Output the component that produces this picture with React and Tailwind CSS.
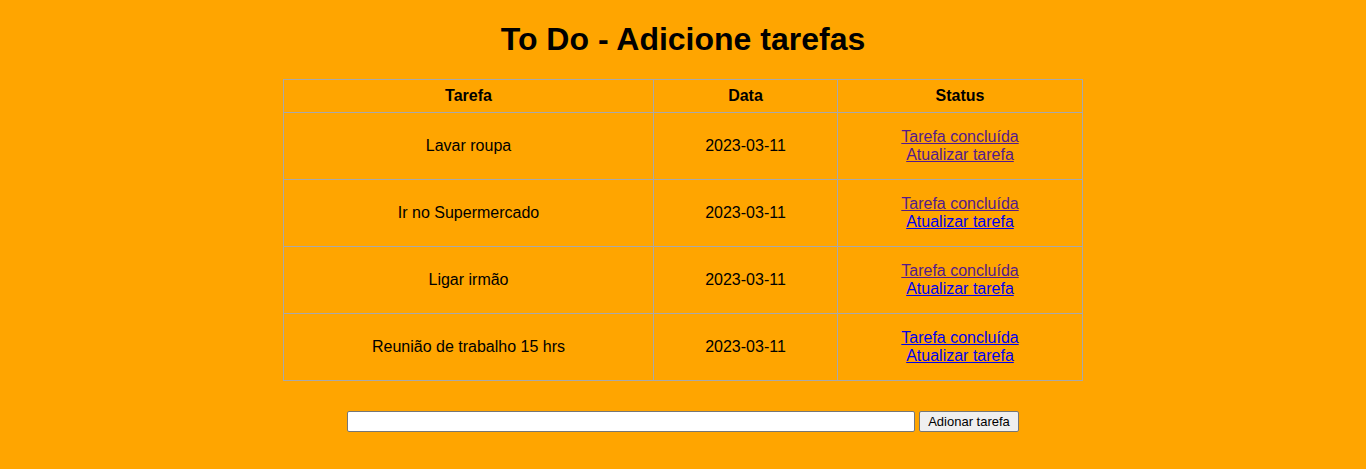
const tasks = [
  { name: "Lavar roupa", date: "2023-03-11", done: true, update: true },
  { name: "Ir no Supermercado", date: "2023-03-11", done: true, update: false },
  { name: "Ligar irmão", date: "2023-03-11", done: true, update: false },
  { name: "Reunião de trabalho 15 hrs", date: "2023-03-11", done: false, update: false },
];

const visited = "text-[#551a8b]";
const fresh = "text-[#0000ee]";

export default function App() {
  return (
    <div className="min-h-[469px] bg-[#ffa500] font-['Liberation_Sans',Arial,sans-serif] text-black">
      <h1 className="pt-[21px] text-center text-[32px] font-bold leading-[37px]">
        To Do - Adicione tarefas
      </h1>

      <table className="mx-auto mt-[21px] w-[800px] border-collapse border border-[#a9a9a9] text-base">
        <thead>
          <tr className="h-[33px]">
            <th className="w-[370px] border border-[#a9a9a9] font-bold">Tarefa</th>
            <th className="w-[184px] border border-[#a9a9a9] font-bold">Data</th>
            <th className="border border-[#a9a9a9] font-bold">Status</th>
          </tr>
        </thead>
        <tbody>
          {tasks.map((t) => (
            <tr key={t.name} className="h-[67px]">
              <td className="border border-[#a9a9a9] text-center">{t.name}</td>
              <td className="border border-[#a9a9a9] text-center">{t.date}</td>
              <td className="border border-[#a9a9a9] text-center leading-[18px]">
                <a href="#" className={`underline ${t.done ? visited : fresh}`}>
                  Tarefa concluída
                </a>
                <br />
                <a href="#" className={`underline ${t.update ? visited : fresh}`}>
                  Atualizar tarefa
                </a>
              </td>
            </tr>
          ))}
        </tbody>
      </table>

      <form
        className="mt-[30px] flex items-center justify-center gap-[4px]"
        onSubmit={(e) => e.preventDefault()}
      >
        <input
          type="text"
          className="h-[21px] w-[568px] rounded-[2px] border border-[#767676] bg-white px-[2px] text-[13px]"
        />
        <button
          type="submit"
          className="h-[21px] w-[100px] rounded-[2px] border border-[#767676] bg-[#efefef] text-[13px] leading-none text-black"
        >
          Adionar tarefa
        </button>
      </form>
    </div>
  );
}
